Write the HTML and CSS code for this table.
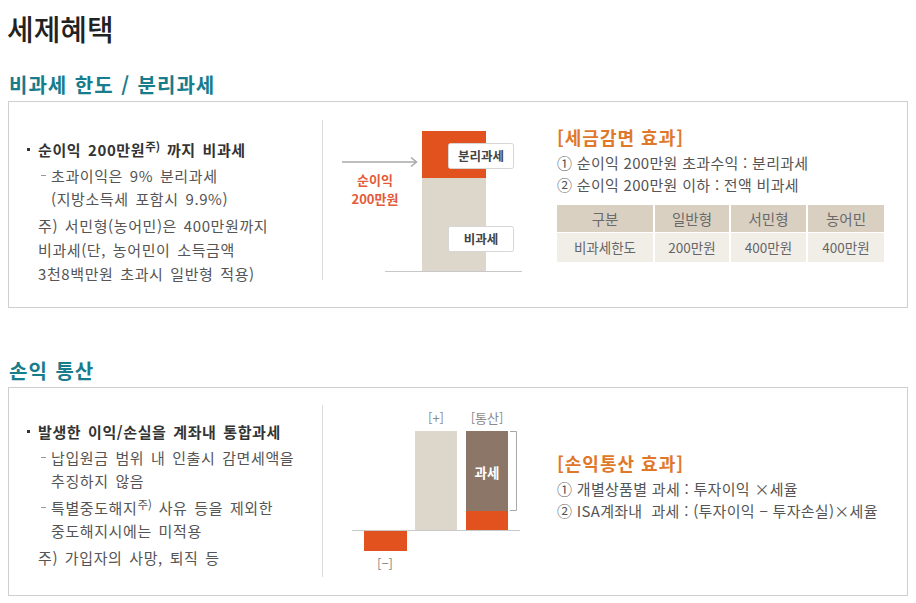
FILE: index.html
```html
<!DOCTYPE html>
<html lang="ko">
<head>
<meta charset="utf-8">
<title>세제혜택</title>
<link rel="stylesheet" href="styles.css">
</head>
<body>
<h1 class="page-title">세제혜택</h1>

<section class="sec">
  <h2 class="sec-title">비과세 한도 / 분리과세</h2>
  <div class="box box-limit">
    <div class="desc desc-limit">
      <p class="lead">순이익 200만원<sup>주)</sup> 까지 비과세</p>
      <p class="item">초과이익은 9% 분리과세<br>(지방소득세 포함시 9.9%)</p>
      <p class="note">주) 서민형(농어민)은 400만원까지<br>비과세(단, 농어민이 소득금액<br>3천8백만원 초과시 일반형 적용)</p>
    </div>
    <div class="chart chart-limit">
      <svg class="chart-svg" width="234" height="160" viewBox="0 0 234 160">
        <line class="c-arrow" x1="19" y1="42" x2="93" y2="42"/>
        <polyline class="c-arrow" points="88,37.5 93.5,42 88,46.5"/>
        <rect x="99" y="11" width="64" height="47" fill="#e2521e"/>
        <rect x="99" y="58" width="64" height="93" fill="#ddd6ca"/>
        <line class="c-base" x1="62" y1="151.5" x2="199" y2="151.5"/>
        <rect class="c-tag" x="125.5" y="23.5" width="65" height="25" rx="2"/>
        <text class="c-label" x="158" y="40.5">분리과세</text>
        <rect class="c-tag" x="125.5" y="106.5" width="65" height="25" rx="2"/>
        <text class="c-label" x="158" y="123.5">비과세</text>
      </svg>
      <p class="chart-note">순이익<br>200만원</p>
    </div>
    <div class="effect effect-limit">
      <p class="effect-title">[세금감면 효과]</p>
      <p class="effect-line">① 순이익 200만원 초과수익 : 분리과세</p>
      <p class="effect-line">② 순이익 200만원 이하 : 전액 비과세</p>
      <div class="limit-table">
        <div class="th">구분</div>
        <div class="th">일반형</div>
        <div class="th">서민형</div>
        <div class="th">농어민</div>
        <div class="td">비과세한도</div>
        <div class="td">200만원</div>
        <div class="td">400만원</div>
        <div class="td">400만원</div>
      </div>
    </div>
  </div>
</section>

<section class="sec">
  <h2 class="sec-title">손익 통산</h2>
  <div class="box box-net">
    <div class="desc desc-net">
      <p class="lead">발생한 이익/손실을 계좌내 통합과세</p>
      <p class="item">납입원금 범위 내 인출시 감면세액을<br>추징하지 않음</p>
      <p class="item">특별중도해지<sup>주)</sup> 사유 등을 제외한<br>중도해지시에는 미적용</p>
      <p class="note">주) 가입자의 사망, 퇴직 등</p>
    </div>
    <div class="chart chart-net">
      <svg class="chart-svg" width="234" height="172" viewBox="0 0 234 172">
        <rect x="41" y="125" width="43" height="21" fill="#e2521e"/>
        <rect x="92" y="26" width="42" height="99" fill="#ddd6ca"/>
        <rect x="143" y="26" width="42" height="80" fill="#8b7668"/>
        <rect x="143" y="106" width="42" height="19" fill="#e2521e"/>
        <line class="c-base" x1="29" y1="125.5" x2="197" y2="125.5"/>
        <polyline class="c-bracket" points="187,26.5 193.5,26.5 193.5,105.5 187,105.5"/>
        <text class="c-white" x="164" y="73">과세</text>
        <text class="c-gray" x="113" y="18">[+]</text>
        <text class="c-gray" x="164" y="18">[통산]</text>
        <text class="c-gray" x="62" y="163">[−]</text>
      </svg>
    </div>
    <div class="effect effect-net">
      <p class="effect-title">[손익통산 효과]</p>
      <p class="effect-line">① 개별상품별 과세 : 투자이익 ×세율</p>
      <p class="effect-line">② ISA계좌내&nbsp; 과세 : (투자이익 − 투자손실)×세율</p>
    </div>
  </div>
</section>
</body>
</html>
```

FILE: styles.css
```css
* { box-sizing: border-box; }

body {
  margin: 0;
  width: 916px;
  background: #fff;
  color: #555;
  font-family: "Noto Sans CJK KR", "Noto Sans", sans-serif;
}

p { margin: 0; }

.page-title {
  margin: 0;
  padding: 8px 0 0 7px;
  font-size: 29px;
  line-height: 40px;
  font-weight: 500;
  color: #222;
}

.sec-title {
  margin: 23px 0 2px 9px;
  font-size: 20px;
  line-height: 28px;
  font-weight: 700;
  letter-spacing: 1px;
  word-spacing: 1px;
  color: #177c8c;
}

.sec + .sec .sec-title { margin-top: 49px; }

.box {
  display: flex;
  margin-left: 8px;
  width: 900px;
  border: 1px solid #cfcfcf;
}

.box-limit { height: 207px; }
.box-net { height: 209px; }

/* left description column */
.desc {
  width: 313px;
  padding-left: 29px;
  font-size: 15px;
  line-height: 23px;
  letter-spacing: 0.6px;
  word-spacing: 2px;
  color: #555;
}
.desc-limit { padding-top: 36px; }
.desc-net { padding-top: 32px; }

.lead {
  margin-left: -11px;
  margin-bottom: 3px;
  font-weight: 700;
  color: #333;
}
.lead::before {
  content: "";
  display: inline-block;
  width: 3px;
  height: 3px;
  margin-right: 8px;
  background: #333;
  vertical-align: 5px;
}

.item {
  padding-left: 13px;
  text-indent: -10px;
  margin-bottom: 4px;
}
.item::before {
  content: "";
  display: inline-block;
  width: 5px;
  height: 1px;
  margin-right: 5px;
  background: #999;
  vertical-align: 6px;
}

.note { line-height: 24px; }

sup {
  font-size: 11.5px;
  line-height: 0;
  letter-spacing: 0;
  vertical-align: 5px;
}

/* chart column */
.chart {
  position: relative;
  width: 235px;
  border-left: 1px solid #dcdcdc;
}
.chart-limit { margin: 18px 0 27px; }
.chart-net { margin: 17px 0 18px; }
.chart-svg { display: block; }

.chart-note {
  position: absolute;
  left: 22px;
  top: 50px;
  width: 60px;
  text-align: center;
  font-size: 13px;
  line-height: 19px;
  font-weight: 700;
  color: #e35b3a;
}

.c-arrow { stroke: #a8a8a8; stroke-width: 1.5; fill: none; }
.c-base { stroke: #c8c8c8; stroke-width: 1; }
.c-bracket { stroke: #a8a8a8; stroke-width: 1; fill: none; }
.c-tag { fill: #fff; stroke: #d6d6d6; stroke-width: 1; }

.c-label {
  fill: #444;
  font-size: 12.5px;
  font-weight: 700;
  text-anchor: middle;
}
.c-white {
  fill: #fff;
  font-size: 13.5px;
  font-weight: 700;
  text-anchor: middle;
}
.c-gray {
  fill: #8a8a8a;
  font-size: 13px;
  text-anchor: middle;
}

/* right effect column */
.effect {
  flex: 1;
  color: #555;
}
.effect-limit { padding-top: 23px; }
.effect-net { padding-top: 63px; }

.effect-title {
  margin-bottom: 3px;
  font-size: 18px;
  line-height: 24px;
  font-weight: 700;
  letter-spacing: 1px;
  color: #e0782a;
}
.effect-line {
  font-size: 15px;
  line-height: 22px;
  letter-spacing: 0.3px;
}

.limit-table {
  display: grid;
  grid-template-columns: 96px 74px 75px 76px;
  gap: 1px 2px;
  width: 327px;
  margin-top: 9px;
  text-align: center;
}
.th {
  height: 27px;
  line-height: 27px;
  background: #d9d0c2;
  font-size: 14.5px;
  color: #6a6a6a;
}
.td {
  height: 29px;
  line-height: 29px;
  background: #f1ede7;
  font-size: 13.5px;
  color: #666;
}
```
